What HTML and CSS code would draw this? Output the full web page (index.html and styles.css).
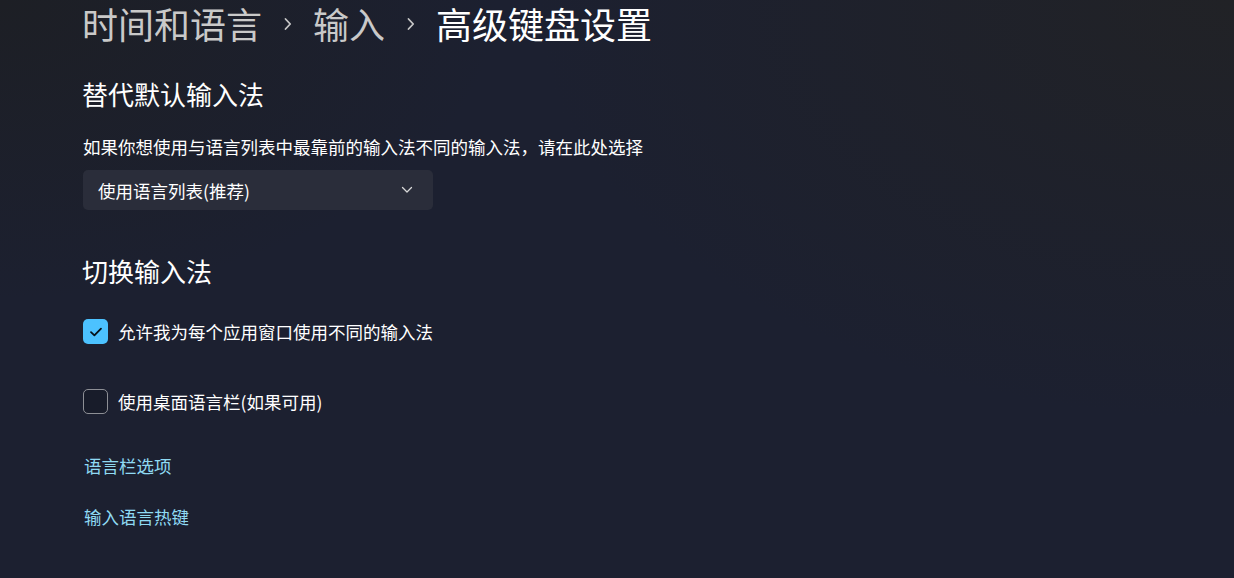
FILE: index.html
```html
<!DOCTYPE html>
<html lang="zh-CN">
<head>
    <meta charset="UTF-8">
    <meta name="viewport" content="width=device-width, initial-scale=1.0">
    <title>高级键盘设置</title>
    <link rel="stylesheet" href="styles.css">
</head>
<body>
<main class="page">
    <!-- Breadcrumb -->
    <h1 class="breadcrumb">
        <span class="crumb">时间和语言</span>
        <svg class="crumb-sep" width="10" height="16" viewBox="0 0 10 16"><path d="M2.5 3 L7.2 8 L2.5 13" fill="none" stroke="#c6c6c6" stroke-width="1.8" stroke-linecap="round" stroke-linejoin="round"/></svg>
        <span class="crumb">输入</span>
        <svg class="crumb-sep" width="10" height="16" viewBox="0 0 10 16"><path d="M2.5 3 L7.2 8 L2.5 13" fill="none" stroke="#c6c6c6" stroke-width="1.8" stroke-linecap="round" stroke-linejoin="round"/></svg>
        <span class="crumb current">高级键盘设置</span>
    </h1>

    <section class="section">
        <h2 class="section-title">替代默认输入法</h2>
        <p class="section-desc">如果你想使用与语言列表中最靠前的输入法不同的输入法，请在此处选择</p>
        <div class="dropdown">
            <span>使用语言列表(推荐)</span>
            <svg width="12" height="8" viewBox="0 0 12 8"><path d="M1.5 1.5 L6 6 L10.5 1.5" fill="none" stroke="#d8d8d8" stroke-width="1.3" stroke-linecap="round" stroke-linejoin="round"/></svg>
        </div>
    </section>

    <section class="section switch">
        <h2 class="section-title">切换输入法</h2>
        <label class="check-row first">
            <span class="box checked">
                <svg width="14" height="12" viewBox="0 0 14 12"><path d="M2 6.2 L5.4 9.4 L12 2.6" fill="none" stroke="#06121a" stroke-width="1.8" stroke-linecap="round" stroke-linejoin="round"/></svg>
            </span>
            <span>允许我为每个应用窗口使用不同的输入法</span>
        </label>
        <label class="check-row second">
            <span class="box"></span>
            <span>使用桌面语言栏(如果可用)</span>
        </label>
    </section>

    <nav class="links">
        <a href="#" class="link first">语言栏选项</a>
        <a href="#" class="link">输入语言热键</a>
    </nav>
</main>
</body>
</html>
```

FILE: styles.css
```css
body {
    margin: 0;
    min-height: 100vh;
    font-family: "Noto Sans CJK SC", "Noto Sans", sans-serif;
    color: #ffffff;
    background:
        radial-gradient(ellipse 700px 420px at 100% 0%, #212226 0%, rgba(33, 34, 38, 0) 100%),
        radial-gradient(ellipse 500px 300px at 0% 0%, #1d1f25 0%, rgba(29, 31, 37, 0) 100%),
        #1c2030;
    overflow: hidden;
}

.page {
    padding-left: 82px;
}

.breadcrumb {
    display: flex;
    align-items: center;
    margin: 0;
    height: 48px;
    font-size: 36px;
    font-weight: normal;
    line-height: 46px;
}

.crumb {
    color: #c9c9c9;
    padding-bottom: 2px;
}

.crumb.current {
    color: #ffffff;
}

.crumb-sep {
    margin: 0 20px 0 21px;
}

.section-title {
    margin: 28px 0 0;
    font-size: 26px;
    font-weight: normal;
    line-height: 36px;
}

.section-desc {
    margin: 22px 0 0;
    padding-left: 1px;
    font-size: 17.5px;
    line-height: 26px;
}

.dropdown {
    display: flex;
    align-items: center;
    justify-content: space-between;
    box-sizing: border-box;
    width: 350px;
    height: 40px;
    margin-top: 10px;
    margin-left: 1px;
    padding: 0 20px 0 15px;
    background: #2a2d3a;
    border-radius: 5px;
    font-size: 17.5px;
}

.switch .section-title {
    margin-top: 43px;
}

.check-row {
    display: flex;
    align-items: center;
    gap: 10px;
    height: 25px;
    margin-left: 1px;
    font-size: 17.5px;
}

.check-row.first {
    margin-top: 30px;
}

.check-row.second {
    margin-top: 45px;
}

.box {
    display: flex;
    align-items: center;
    justify-content: center;
    box-sizing: border-box;
    width: 25px;
    height: 25px;
    border: 1.5px solid #8d8f95;
    border-radius: 5px;
    background: rgba(0, 0, 0, 0.12);
}

.box.checked {
    border: none;
    background: #4cc2ff;
}

.links {
    display: flex;
    flex-direction: column;
    align-items: flex-start;
    margin-top: 39px;
}

.link {
    color: #8fdaf3;
    text-decoration: none;
    font-size: 17.5px;
    line-height: 26px;
    padding-left: 2px;
}

.link + .link {
    margin-top: 25px;
}
```
